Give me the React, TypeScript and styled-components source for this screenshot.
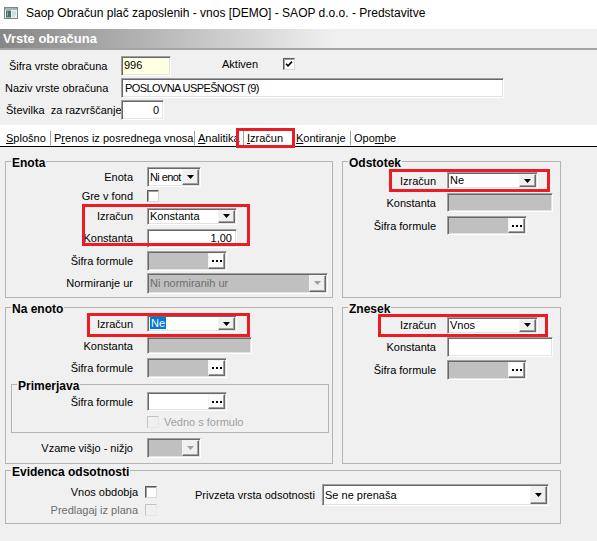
import React from "react";
import styled, { createGlobalStyle } from "styled-components";

const GlobalStyle = createGlobalStyle`
  html, body { margin: 0; padding: 0; background: #f0f0f0; }
  body { font-family: "Liberation Sans", Arial, sans-serif; font-size: 11px; color: #000; }
  * { box-sizing: border-box; }
  #root { width: 597px; }
`;

const Window = styled.div`
  width: 597px;
  height: 541px;
  background: #f0f0f0;
  overflow: hidden;
  display: flex;
  flex-direction: column;
`;

const TitleBar = styled.div`
  height: 29px;
  flex: none;
  background: #fff;
  display: flex;
  align-items: center;
  gap: 8px;
  padding: 0 0 3px 4px;
  font-size: 12px;
  color: #000;
`;

const Header = styled.div`
  height: 21px;
  flex: none;
  border-bottom: 2px solid #a3a3a3;
  background: linear-gradient(to right, #868686 0%, #f0f0f0 56%);
  color: #fff;
  font-weight: bold;
  font-size: 13px;
  padding-left: 3px;
  display: flex;
  align-items: center;
`;

const HeaderForm = styled.div`
  padding: 4px 0 4px 0;
  flex: none;
`;

const HRow = styled.div<{ $h: number }>`
  display: grid;
  grid-template-columns: 121px auto;
  align-items: center;
  height: ${(p) => p.$h}px;
`;

const HLabel = styled.span<{ $indent: number }>`
  padding-left: ${(p) => p.$indent}px;
  white-space: pre;
`;

const HCell = styled.div`
  display: flex;
  align-items: center;
`;

const AktivGroup = styled.div`
  display: flex;
  align-items: center;
  margin-left: 51px;
  margin-bottom: 4px;
  gap: 25px;
`;

const Field = styled.div<{ $w: number; $h: number; $bg?: string; $right?: boolean; $combo?: boolean }>`
  width: ${(p) => p.$w}px;
  height: ${(p) => p.$h}px;
  flex: none;
  background: ${(p) => p.$bg ?? "#fff"};
  border: 1px solid;
  border-color: #a0a0a0 #fff #fff #a0a0a0;
  box-shadow: inset 1px 1px 0 #696969, inset -1px -1px 0 #e3e3e3;
  display: flex;
  align-items: center;
  justify-content: ${(p) => (p.$right ? "flex-end" : "flex-start")};
  padding: ${(p) => (p.$combo ? "1px" : "0 4px 0 2px")};
  overflow: hidden;
  white-space: nowrap;
  line-height: 13px;
`;

const Value = styled.span<{ $muted?: boolean; $tight?: boolean }>`
  flex: 1;
  min-width: 0;
  white-space: nowrap;
  padding-left: 1px;
  color: ${(p) => (p.$muted ? "#6d6d6d" : "#000")};
  letter-spacing: ${(p) => (p.$tight ? "-0.6px" : "0")};
`;

const Selected = styled.span`
  background: #0078d7;
  color: #fff;
  padding: 0 1px;
`;

const FaceButton = styled.span<{ $light?: boolean }>`
  position: relative;
  z-index: 1;
  width: 17px;
  height: 100%;
  flex: none;
  background: ${(p) => (p.$light ? "#fbfbfb" : "#f0f0f0")};
  border: 1px solid;
  border-color: #f4f4f4 #696969 #696969 #f4f4f4;
  box-shadow: inset -1px -1px 0 #a0a0a0;
  display: flex;
  align-items: center;
  justify-content: center;
`;

const Check = styled.span<{ $disabled?: boolean }>`
  width: 12px;
  height: 12px;
  flex: none;
  background: ${(p) => (p.$disabled ? "#f0f0f0" : "#fff")};
  border: 1px solid;
  border-color: ${(p) => (p.$disabled ? "#c4c4c4 #e6e6e6 #e6e6e6 #c4c4c4" : "#5a5a5a #d8d8d8 #d8d8d8 #5a5a5a")};
  box-shadow: ${(p) => (p.$disabled ? "none" : "inset 1px 1px 0 #a0a0a0")};
  display: flex;
  align-items: center;
  justify-content: center;
`;

const TabStrip = styled.div`
  position: relative;
  flex: none;
  height: 22px;
  background: #fff;
  border-bottom: 1px solid #000;
  display: flex;
  align-items: flex-end;
  padding: 0 0 1px 3px;
`;

const Tab = styled.span<{ $w?: number }>`
  width: ${(p) => (p.$w ? `${p.$w}px` : "auto")};
  line-height: 14px;
  padding-left: 3px;
  white-space: nowrap;
  border-right: ${(p) => (p.$w ? "1px solid #a0a0a0" : "none")};
  overflow: hidden;
  u { text-decoration-thickness: 1px; text-underline-offset: 1px; }
`;

const Mark = styled.span<{ $l: number; $t: number; $w: number; $h: number }>`
  position: absolute;
  left: ${(p) => p.$l}px;
  top: ${(p) => p.$t}px;
  width: ${(p) => p.$w}px;
  height: ${(p) => p.$h}px;
  border: 3px solid #ec1c24;
  pointer-events: none;
  z-index: 3;
`;

const Content = styled.div`
  padding: 14px 0 0 5px;
  display: grid;
  grid-template-columns: 328px 219px;
  grid-template-rows: 137px 157px;
  column-gap: 9px;
  row-gap: 9px;
`;

const Group = styled.div`
  position: relative;
  border: 1px solid #b4b4b4;
  min-width: 0;
`;

const SubGroup = styled(Group)`
  margin: 5px 3px 0 5px;
  height: 49px;
`;

const EvGroup = styled(Group)`
  margin: 6px 0 0 5px;
  width: 556px;
  height: 54px;
`;

const GroupTitle = styled.div`
  margin: -6px 0 -8px 5px;
  padding: 0 1px;
  width: fit-content;
  background: #f0f0f0;
  font-weight: bold;
  font-size: 12px;
  line-height: 14px;
  position: relative;
`;

const Body = styled.div<{ $pt: number; $lw: number; $gap: number }>`
  padding-top: ${(p) => p.$pt}px;
  --lw: ${(p) => p.$lw}px;
  --gap: ${(p) => p.$gap}px;
`;

const Row = styled.div<{ $h: number; $mt?: number }>`
  display: grid;
  grid-template-columns: var(--lw) auto;
  column-gap: var(--gap);
  align-items: center;
  justify-items: start;
  height: ${(p) => p.$h}px;
  margin-top: ${(p) => p.$mt ?? 0}px;
`;

const Label = styled.span<{ $tone?: "dim" | "faint" }>`
  justify-self: end;
  white-space: nowrap;
  color: ${(p) => (p.$tone === "dim" ? "#6d6d6d" : p.$tone === "faint" ? "#a0a0a0" : "#000")};
`;

const CheckLine = styled.span`
  display: flex;
  align-items: center;
  gap: 5px;
`;

const EvBody = styled.div`
  display: flex;
  align-items: flex-start;
  padding-top: 12px;
`;

const EvLeft = styled.div`
  width: 150px;
  --lw: 132px;
  --gap: 7px;
`;

const EvRight = styled.div`
  display: flex;
  align-items: center;
  gap: 6px;
  margin: 1px 0 0 39px;
  height: 22px;
`;

const EvLabel = styled.span`
  width: 121px;
  white-space: nowrap;
`;

const AppIcon = () => (
  <svg width="14" height="12" viewBox="0 0 14 12">
    <rect x="0.5" y="0.5" width="13" height="11" fill="#eef1f2" stroke="#7d868a" />
    <rect x="1" y="1" width="12" height="2" fill="#a9b3b7" />
    <rect x="2" y="3.5" width="5" height="7" fill="#3d7566" />
    <rect x="3" y="4.5" width="1" height="5" fill="#7fae9c" />
    <rect x="8" y="4.5" width="4" height="1" fill="#b8c2c6" />
    <rect x="8" y="6.5" width="4" height="1" fill="#b8c2c6" />
    <rect x="8" y="8.5" width="3" height="1" fill="#b8c2c6" />
  </svg>
);

const CheckMark = () => (
  <svg width="8" height="8" viewBox="0 0 8 8">
    <path d="M1 3.8 L3 5.8 L7 1.6" fill="none" stroke="#000" strokeWidth="1.6" />
  </svg>
);

const Arrow = ({ muted }: { muted?: boolean }) => (
  <svg width="7" height="4" viewBox="0 0 7 4">
    <polygon points="0,0 7,0 3.5,4" fill={muted ? "#a0a0a0" : "#000"} />
  </svg>
);

const Dots = () => (
  <svg width="10" height="2" viewBox="0 0 10 2">
    <rect x="0" y="0" width="2" height="2" fill="#000" />
    <rect x="4" y="0" width="2" height="2" fill="#000" />
    <rect x="8" y="0" width="2" height="2" fill="#000" />
  </svg>
);

type ComboProps = { w: number; h: number; children?: React.ReactNode; disabled?: boolean; tight?: boolean };

const Combo = ({ w, h, children, disabled, tight }: ComboProps) => (
  <Field $w={w} $h={h} $combo $bg={disabled ? "#c0c0c0" : "#fff"}>
    <Value $muted={disabled} $tight={tight}>{children}</Value>
    <FaceButton>
      <Arrow muted={disabled} />
    </FaceButton>
  </Field>
);

const Lookup = ({ w, h, disabled }: { w: number; h: number; disabled?: boolean }) => (
  <Field $w={w} $h={h} $combo $bg={disabled ? "#c0c0c0" : "#fff"}>
    <Value />
    <FaceButton $light>
      <Dots />
    </FaceButton>
  </Field>
);

export default function App() {
  return (
    <Window>
      <GlobalStyle />
      <TitleBar>
        <AppIcon />
        <span>Saop Obračun plač zaposlenih - vnos [DEMO] - SAOP d.o.o. - Predstavitve</span>
      </TitleBar>
      <Header>Vrste obračuna</Header>
      <HeaderForm>
        <HRow $h={23}>
          <HLabel $indent={9}>Šifra vrste obračuna</HLabel>
          <HCell>
            <Field $w={50} $h={20} $bg="#ffffe1">996</Field>
            <AktivGroup>
              <span>Aktiven</span>
              <Check>
                <CheckMark />
              </Check>
            </AktivGroup>
          </HCell>
        </HRow>
        <HRow $h={22}>
          <HLabel $indent={5}>Naziv vrste obračuna</HLabel>
          <HCell>
            <Field $w={383} $h={20}>
              <Value $tight>POSLOVNA USPEŠNOST (9)</Value>
            </Field>
          </HCell>
        </HRow>
        <HRow $h={22}>
          <HLabel $indent={6}>{"Številka  za razvrščanje"}</HLabel>
          <HCell>
            <Field $w={43} $h={20} $right>0</Field>
          </HCell>
        </HRow>
      </HeaderForm>
      <TabStrip>
        <Tab $w={48}><u>S</u>plošno</Tab>
        <Tab $w={144}>P<u>r</u>enos iz posrednega vnosa</Tab>
        <Tab $w={49}><u>A</u>nalitika</Tab>
        <Tab $w={49}><u>I</u>zračun</Tab>
        <Tab $w={58}><u>K</u>ontiranje</Tab>
        <Tab>Opo<u>m</u>be</Tab>
        <Mark $l={236} $t={3} $w={59} $h={20} />
      </TabStrip>
      <Content>
        <Group>
          <GroupTitle>Enota</GroupTitle>
          <Body $pt={5} $lw={127} $gap={14}>
            <Row $h={20}>
              <Label>Enota</Label>
              <Combo w={54} h={20} tight>Ni enot</Combo>
            </Row>
            <Row $h={18}>
              <Label>Gre v fond</Label>
              <Check />
            </Row>
            <Row $h={22}>
              <Label>Izračun</Label>
              <Combo w={90} h={17}>Konstanta</Combo>
            </Row>
            <Row $h={22}>
              <Label>Konstanta</Label>
              <Field $w={90} $h={19} $right>1,00</Field>
            </Row>
            <Row $h={23}>
              <Label>Šifra formule</Label>
              <Lookup w={80} h={20} disabled />
            </Row>
            <Row $h={22}>
              <Label>Normiranje ur</Label>
              <Combo w={181} h={21} disabled>Ni normiranih ur</Combo>
            </Row>
          </Body>
          <Mark $l={76} $t={42} $w={168} $h={42} />
        </Group>

        <Group>
          <GroupTitle>Odstotek</GroupTitle>
          <Body $pt={8} $lw={93} $gap={11}>
            <Row $h={21}>
              <Label>Izračun</Label>
              <Combo w={91} h={17}>Ne</Combo>
            </Row>
            <Row $h={23}>
              <Label>Konstanta</Label>
              <Field $w={106} $h={19} $bg="#c0c0c0" />
            </Row>
            <Row $h={23}>
              <Label>Šifra formule</Label>
              <Lookup w={80} h={19} disabled />
            </Row>
          </Body>
          <Mark $l={46} $t={7} $w={161} $h={23} />
        </Group>

        <Group>
          <GroupTitle>Na enoto</GroupTitle>
          <Body $pt={5} $lw={127} $gap={14}>
            <Row $h={21}>
              <Label>Izračun</Label>
              <Combo w={90} h={17}>
                <Selected>Ne</Selected>
              </Combo>
            </Row>
            <Row $h={23}>
              <Label>Konstanta</Label>
              <Field $w={105} $h={17} $bg="#c0c0c0" />
            </Row>
            <Row $h={22}>
              <Label>Šifra formule</Label>
              <Lookup w={80} h={20} disabled />
            </Row>
            <SubGroup>
              <GroupTitle>Primerjava</GroupTitle>
              <Body $pt={6} $lw={121} $gap={14}>
                <Row $h={21}>
                  <Label>Šifra formule</Label>
                  <Lookup w={80} h={19} />
                </Row>
                <Row $h={20}>
                  <span />
                  <CheckLine>
                    <Check $disabled />
                    <Label $tone="faint">Vedno s formulo</Label>
                  </CheckLine>
                </Row>
              </Body>
            </SubGroup>
            <Row $h={22} $mt={4}>
              <Label>Vzame višjo - nižjo</Label>
              <Combo w={54} h={20} disabled />
            </Row>
          </Body>
          <Mark $l={81} $t={5} $w={163} $h={24} />
        </Group>

        <Group>
          <GroupTitle>Znesek</GroupTitle>
          <Body $pt={7} $lw={93} $gap={11}>
            <Row $h={20}>
              <Label>Izračun</Label>
              <Combo w={91} h={17}>Vnos</Combo>
            </Row>
            <Row $h={24}>
              <Label>Konstanta</Label>
              <Field $w={106} $h={20} />
            </Row>
            <Row $h={22}>
              <Label>Šifra formule</Label>
              <Lookup w={80} h={20} disabled />
            </Row>
          </Body>
          <Mark $l={35} $t={6} $w={170} $h={23} />
        </Group>
      </Content>

      <EvGroup>
        <GroupTitle>Evidenca odsotnosti</GroupTitle>
        <EvBody>
          <EvLeft>
            <Row $h={18}>
              <Label>Vnos obdobja</Label>
              <Check />
            </Row>
            <Row $h={18}>
              <Label $tone="dim">Predlagaj iz plana</Label>
              <Check $disabled />
            </Row>
          </EvLeft>
          <EvRight>
            <EvLabel>Privzeta vrsta odsotnosti</EvLabel>
            <Combo w={227} h={22}>Se ne prenaša</Combo>
          </EvRight>
        </EvBody>
      </EvGroup>
    </Window>
  );
}
